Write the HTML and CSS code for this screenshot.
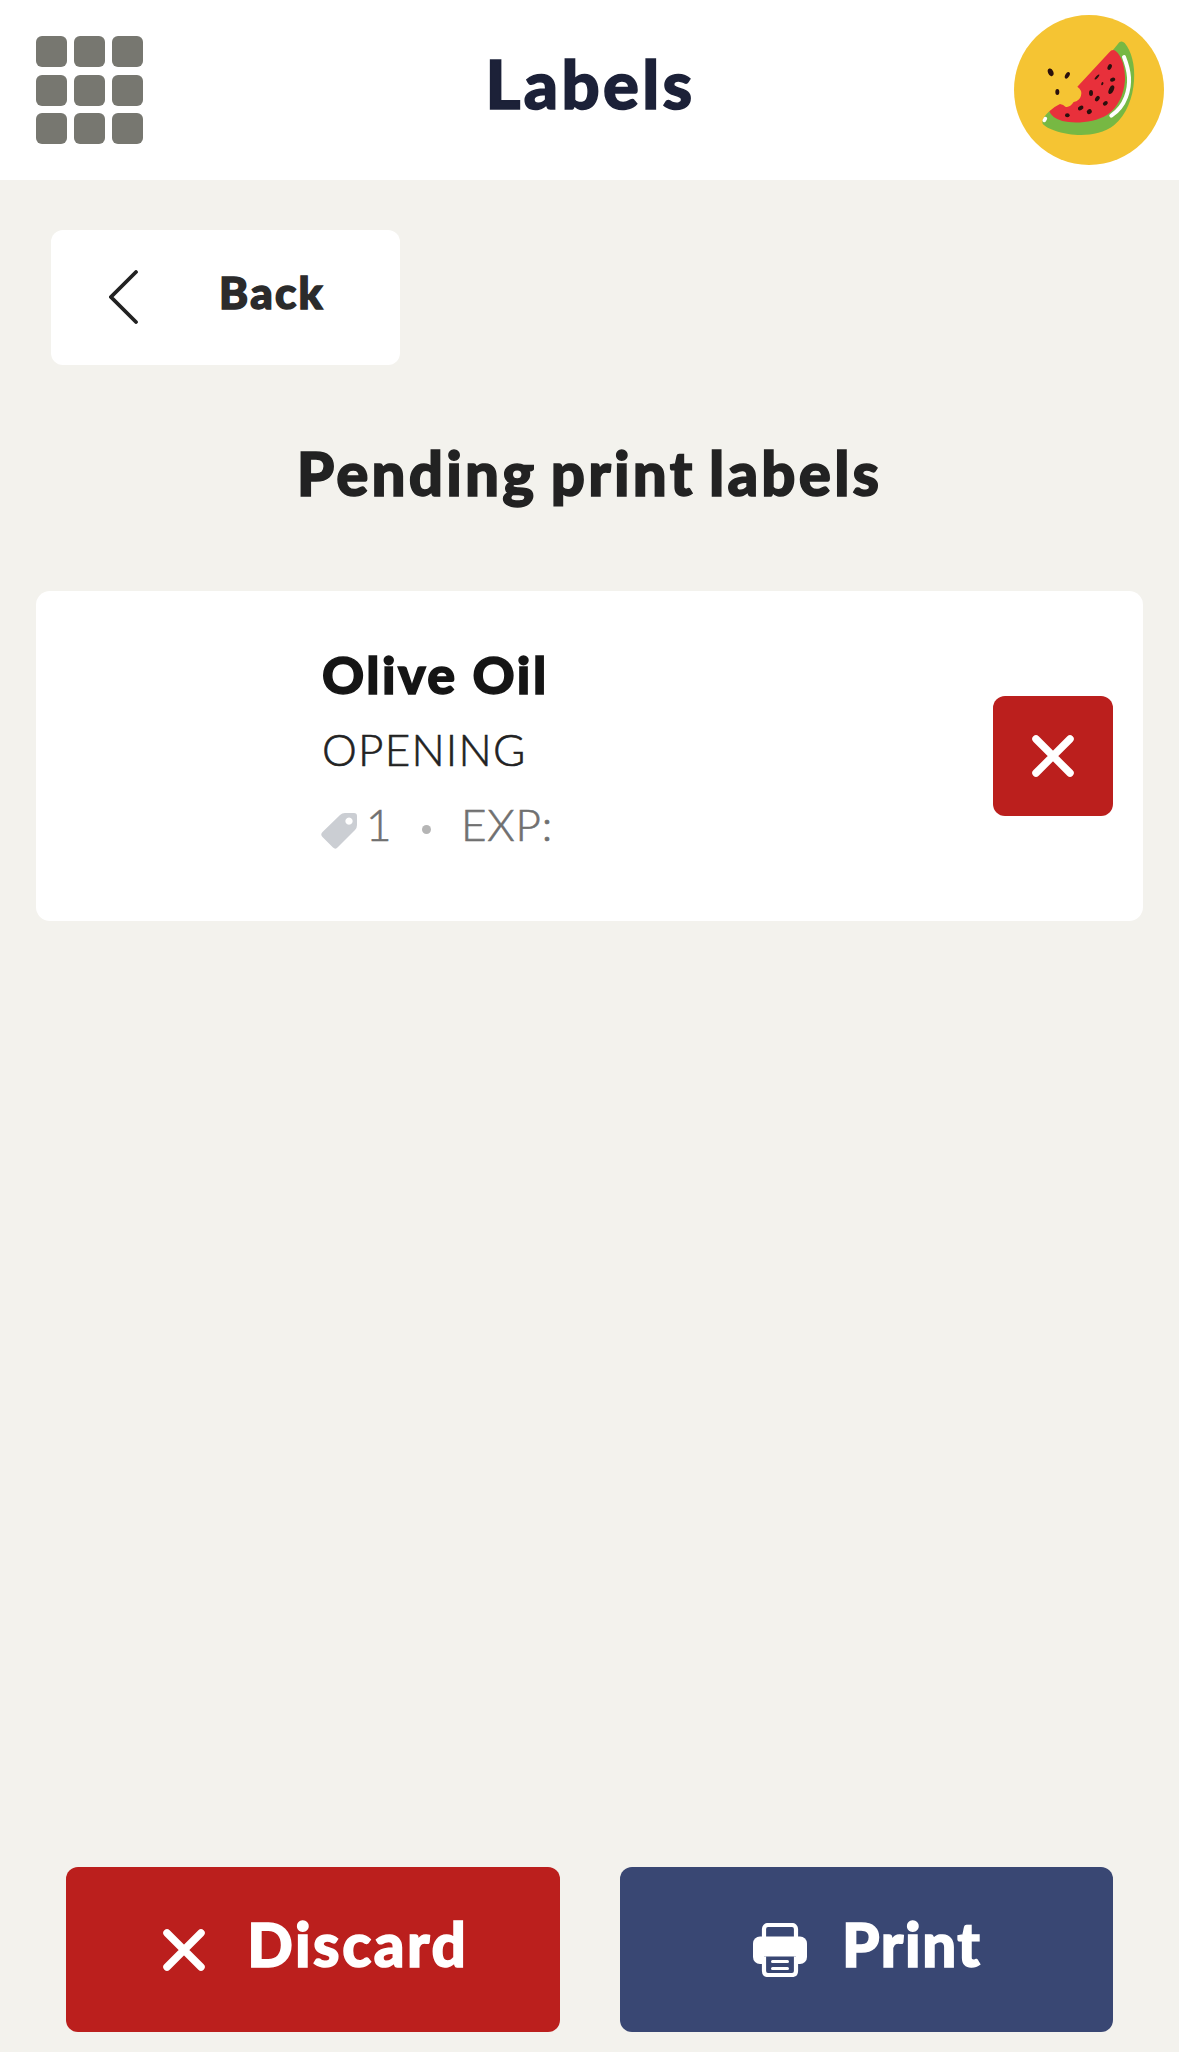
FILE: index.html
```html
<!DOCTYPE html>
<html lang="en">
<head>
    <meta charset="UTF-8">
    <meta name="viewport" content="width=device-width, initial-scale=1.0">
    <title>Labels</title>
    <link rel="stylesheet" href="styles.css">
</head>
<body>
    <div class="app">
        <header class="topbar">
            <div class="menu-grid">
                <span></span><span></span><span></span>
                <span></span><span></span><span></span>
                <span></span><span></span><span></span>
            </div>
            <h1>Labels</h1>
            <svg class="avatar" viewBox="0 0 450 450">
                <circle cx="225" cy="225" r="225" fill="#f5c433"/>
                <!-- rind -->
                <path d="M297 105 L316 82 Q324 76 332 84 C352 108 364 150 360 198 C357 246 338 300 300 331 C262 361 205 364 163 357 C132 352 103 343 87 328 C82 320 88 305 106 289 C150 325 300 320 315 200 Q320 150 297 105 Z" fill="#77b843"/>
                <!-- flesh with the bite taken out -->
                <path d="M190 215 L286 112 Q295 100 305 108 C323 122 334 158 333 195 C330 240 311 278 280 299 C240 324 180 326 145 318 Q113 309 106 289 Q122 274 138 267 Q149 269 154 275 Q167 279 179 261 Q197 257 201 242 Q206 226 190 215 Z" fill="#e8303b"/>
                <path d="M330 126 C347 170 351 205 336 246 Q323 281 292 302" fill="none" stroke="#fff" stroke-width="12" stroke-linecap="round"/>
                <path d="M91 316 L94 311" stroke="#fff" stroke-width="11" stroke-linecap="round"/>
                <g fill="#2a100d">
                    <ellipse cx="110" cy="172" rx="8" ry="12" transform="rotate(-22 110 172)"/>
                    <ellipse cx="160" cy="181" rx="6" ry="11" transform="rotate(30 160 181)"/>
                    <ellipse cx="130" cy="231" rx="6" ry="9"/>
                    <ellipse cx="287" cy="156" rx="6" ry="9" transform="rotate(25 287 156)"/>
                    <ellipse cx="249" cy="186" rx="3" ry="10" transform="rotate(42 249 186)"/>
                    <ellipse cx="296" cy="194" rx="8" ry="6" transform="rotate(-12 296 194)"/>
                    <ellipse cx="265" cy="206" rx="3" ry="5" transform="rotate(25 265 206)"/>
                    <ellipse cx="292" cy="224" rx="7" ry="14" transform="rotate(25 292 224)"/>
                    <ellipse cx="231" cy="234" rx="6" ry="9"/>
                    <ellipse cx="250" cy="251" rx="6" ry="9" transform="rotate(35 250 251)"/>
                    <ellipse cx="274" cy="265" rx="8" ry="6" transform="rotate(-35 274 265)"/>
                    <ellipse cx="200" cy="279" rx="9" ry="6" transform="rotate(-30 200 279)"/>
                    <ellipse cx="226" cy="290" rx="8" ry="7" transform="rotate(-35 226 290)"/>
                    <ellipse cx="160" cy="301" rx="7" ry="6"/>
                </g>
            </svg>
        </header>

        <main>
            <button class="back-btn">
                <svg class="chevron" viewBox="0 0 30 54"><path d="M27 2 L2 27 L27 52"/></svg>
                <span>Back</span>
            </button>

            <h2>Pending print labels</h2>

            <div class="label-card">
                <div class="label-info">
                    <div class="label-name">Olive Oil</div>
                    <div class="label-type">OPENING</div>
                    <div class="label-meta">
                        <svg class="tag" viewBox="0 0 36 36">
                            <path fill-rule="evenodd" d="M19 2 Q21 0 24 0 H33 Q36 0 36 3 V12 Q36 15 34 17 L17 34 Q14.500 37 12 34.500 L1.500 24 Q-1 21.500 1.500 19 Z M28 4.500 a3.600 3.600 0 1 0 .010 0 Z"/>
                        </svg>
                        <span class="count">1</span>
                        <span class="dot"></span>
                        <span class="exp">EXP:</span>
                    </div>
                </div>
                <button class="remove-btn">
                    <svg class="cross" viewBox="0 0 42 42"><path d="M4 4 L38 38 M38 4 L4 38"/></svg>
                </button>
            </div>
        </main>

        <footer class="actions">
            <button class="action discard">
                <svg class="cross" viewBox="0 0 42 42"><path d="M4 4 L38 38 M38 4 L4 38"/></svg>
                <span>Discard</span>
            </button>
            <button class="action print">
                <svg class="printer" viewBox="0 0 54 54">
                    <rect x="11" y="2" width="32" height="22" rx="4" class="line"/>
                    <rect x="0" y="13.500" width="54" height="27.500" rx="7" fill="#fff"/>
                    <path d="M11 33.500 V48 Q11 52 15 52 H39 Q43 52 43 48 V33.500" fill="#394773" class="line"/>
                    <path d="M19.500 38.500 H34.500 M19.500 45.500 H34.500" class="paper"/>
                </svg>
                <span>Print</span>
            </button>
        </footer>
    </div>
</body>
</html>
```
FILE: styles.css
```css
* {
    box-sizing: border-box;
}

body {
    margin: 0;
    background-color: #fff;
    font-family: Lato, 'Open Sans', sans-serif;
    color: #222;
}

.app {
    width: 1179px;
    height: 2052px;
    display: flex;
    flex-direction: column;
    background-color: #f3f2ed;
}

button {
    border: none;
    padding: 0;
    font-family: inherit;
    cursor: pointer;
}

svg {
    display: block;
    flex-shrink: 0;
}

h1, h2, .back-btn span, .label-name, .action span {
    font-weight: 900;
    -webkit-text-stroke: 1.5px currentColor;
}

.topbar {
    height: 180px;
    padding: 0 15px 0 36px;
    display: grid;
    grid-template-columns: 150px 1fr 150px;
    align-items: center;
    background-color: #fff;
}

.menu-grid {
    display: grid;
    grid-template-columns: repeat(3, 31px);
    gap: 7.5px 7px;
}

.menu-grid span {
    height: 31px;
    border-radius: 6px;
    background-color: #777770;
}

h1 {
    margin: 0;
    padding: 0 19px 14px 0;
    text-align: center;
    font-size: 67px;
    line-height: 80px;
    letter-spacing: 3.3px;
    color: #1c2138;
}

.avatar {
    width: 150px;
    height: 150px;
}

main {
    padding: 50px 36px 0;
}

.back-btn {
    width: 349px;
    height: 135px;
    margin-left: 15px;
    padding-left: 58px;
    display: flex;
    align-items: center;
    border-radius: 12px;
    background-color: #fff;
}

.chevron {
    width: 30px;
    height: 54px;
    margin-bottom: 2px;
    fill: none;
    stroke: #222;
    stroke-width: 3.8;
    stroke-linecap: round;
}

.back-btn span {
    margin-left: 80px;
    padding-bottom: 11px;
    font-size: 44px;
    letter-spacing: 2.3px;
    color: #2b2b2b;
}

h2 {
    margin: 72px 0 82px;
    text-align: center;
    font-size: 60px;
    line-height: 72px;
    letter-spacing: 3.2px;
    word-spacing: -4px;
    color: #222;
}

.label-card {
    height: 330px;
    padding: 0 30px 0 285px;
    display: flex;
    justify-content: space-between;
    align-items: center;
    border-radius: 14px;
    background-color: #fff;
}

.label-info {
    align-self: flex-start;
    padding-top: 51px;
}

.label-name {
    padding-left: 1px;
    font-size: 52px;
    line-height: 64px;
    letter-spacing: 2.5px;
    color: #151515;
}

.label-type {
    margin-top: 13px;
    padding-left: 1px;
    font-size: 44px;
    line-height: 60px;
    font-weight: 300;
    letter-spacing: 1.2px;
    -webkit-text-stroke: 0.6px currentColor;
    color: #222;
}

.label-meta {
    margin-top: 15px;
    display: flex;
    align-items: center;
    font-size: 44px;
    line-height: 60px;
    font-weight: 300;
    letter-spacing: 0.8px;
    -webkit-text-stroke: 0.6px currentColor;
    color: #707070;
}

.tag {
    width: 36px;
    height: 36px;
    margin-top: 14px;
    fill: #cbced3;
}

.count {
    width: 26px;
    margin-left: 9px;
}

.dot {
    width: 9px;
    height: 9px;
    margin: 10px 30px 0 30px;
    border-radius: 50%;
    background-color: #b5b5b5;
}

.remove-btn {
    width: 120px;
    height: 120px;
    display: flex;
    justify-content: center;
    align-items: center;
    border-radius: 12px;
    background-color: #bb1f1d;
}

.cross {
    width: 42px;
    height: 42px;
    stroke: #fff;
    stroke-width: 7.5;
    stroke-linecap: round;
}

.actions {
    margin-top: auto;
    padding: 0 66px 20px;
    display: grid;
    grid-template-columns: 1fr 1fr;
    gap: 60px;
}

.action {
    height: 165px;
    display: flex;
    justify-content: center;
    align-items: center;
    border-radius: 12px;
    font-size: 60px;
    color: #fff;
}

.action span {
    padding-bottom: 11px;
}

.discard {
    gap: 42px;
    padding-left: 6px;
    letter-spacing: 2.5px;
    background-color: #bb1f1d;
}

.print {
    gap: 35px;
    padding-left: 2px;
    letter-spacing: 1.6px;
    background-color: #394773;
}

.printer {
    width: 54px;
    height: 54px;
}

.printer .line {
    stroke: #fff;
    stroke-width: 4.2;
}

.printer rect.line {
    fill: none;
}

.printer .paper {
    stroke: #fff;
    stroke-width: 3;
    stroke-linecap: round;
}
```
